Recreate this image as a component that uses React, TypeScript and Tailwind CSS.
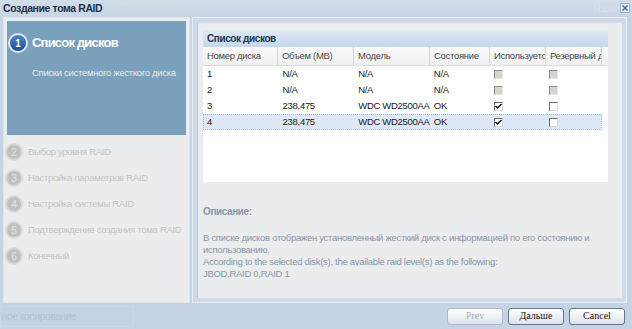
import React from 'react';

type Box = 'off' | 'on' | 'empty';

const rows: { no: string; size: string; model: string; state: string; used: Box; spare: Box; sel?: boolean }[] = [
  { no: '1', size: 'N/A', model: 'N/A', state: 'N/A', used: 'off', spare: 'off' },
  { no: '2', size: 'N/A', model: 'N/A', state: 'N/A', used: 'off', spare: 'off' },
  { no: '3', size: '238,475', model: 'WDC WD2500AAKS', state: 'OK', used: 'on', spare: 'empty' },
  { no: '4', size: '238,475', model: 'WDC WD2500AAKS', state: 'OK', used: 'on', spare: 'empty', sel: true },
];

const cols = ['Номер диска', 'Объем (MB)', 'Модель', 'Состояние', 'Используется', 'Резервный диск'];
const widths = ['w-[75px]', 'w-[76px]', 'w-[76px]', 'w-[60px]', 'w-[56px]', 'w-[56px]'];

const steps = [
  { n: 2, label: 'Выбор уровня RAID' },
  { n: 3, label: 'Настройка параметров RAID' },
  { n: 4, label: 'Настройка системы RAID' },
  { n: 5, label: 'Подтверждение создания тома RAID' },
  { n: 6, label: 'Конечный' },
];

const Check: React.FC<{ kind: Box }> = ({ kind }) => {
  if (kind === 'off') {
    return <span className="block w-[9px] h-[9px] bg-[#d6d3cc] border border-t-[#8f8f8f] border-l-[#8f8f8f] border-r-[#e8e8e8] border-b-[#e8e8e8]" />;
  }
  return (
    <span className="flex items-center justify-center w-[9px] h-[9px] bg-white border border-t-[#6d6d6d] border-l-[#6d6d6d] border-r-[#d8d8d8] border-b-[#d8d8d8]">
      {kind === 'on' && (
        <svg width="7" height="7" viewBox="0 0 7 7">
          <path d="M0.5 3 L2.5 5 L6.5 1" stroke="#111" strokeWidth="1.4" fill="none" />
        </svg>
      )}
    </span>
  );
};

const Btn: React.FC<{ label: string; disabled?: boolean }> = ({ label, disabled }) => (
  <button
    className={`w-[56px] h-[17px] rounded-[3px] border text-[10px] tracking-normal leading-none font-['Liberation_Serif',serif] bg-gradient-to-b from-[#ffffff] to-[#dde3ea] ${
      disabled ? 'border-[#a9bbcf] text-[#a7afb8]' : 'border-[#5f7896] text-[#1a1a1a]'
    }`}
  >
    {label}
  </button>
);

export default function App() {
  return (
    <div className="w-[632px] h-[329px] overflow-hidden bg-[#c5d3e4] font-['Liberation_Sans',sans-serif] text-[9.5px] tracking-[-0.3px] relative">
      {/* title bar */}
      <div className="h-[17px] flex items-center pl-[3px] pr-[2px] bg-gradient-to-b from-[#d3dde9] to-[#c8d5e5]">
        <span className="font-bold text-[10.5px] tracking-[-0.4px] text-[#1f2f45]">Создание тома RAID</span>
        <span className="ml-[10px] -mt-[12px] text-[9px] text-[#d6dee8]">www.thecus.com</span>
        <span className="ml-auto text-[10px] text-[#d7dfe9]">Язык:</span>
        <span className="ml-[2px] -mt-[2px] w-[10px] h-[10px] flex items-center justify-center bg-[#eef3f9] border border-[#9fb4cc]">
          <svg width="6" height="6" viewBox="0 0 6 6">
            <path d="M0.5 0.5 L5.5 5.5 M5.5 0.5 L0.5 5.5" stroke="#3a6ea8" strokeWidth="1.5" />
          </svg>
        </span>
      </div>

      {/* body */}
      <div className="h-[286px] flex gap-[2px] pl-[3px] pr-[5px]">
        {/* left steps */}
        <div className="w-[187px] h-[286px] bg-[#ebeced] border border-[#dde6ef] flex flex-col">
          <div className="m-[3px] h-[114px] bg-[#7aa0bc]">
            <div className="flex items-center pl-[1px] pt-[12px]">
              <span className="shrink-0 w-[20px] h-[20px] rounded-full border-2 border-[#dfe8f2] bg-gradient-to-b from-[#4f83c9] to-[#1c4e98] text-white text-[10px] font-bold flex items-center justify-center">
                1
              </span>
              <span className="ml-[4px] text-[13px] tracking-[-0.8px] font-bold text-white">Список дисков</span>
            </div>
            <div className="pl-[25px] mt-[13px] text-[#e3ebf3] whitespace-nowrap">Списки системного жесткого диска</div>
          </div>
          <div className="flex flex-col mt-[1px] pl-[1px]">
            {steps.map((s) => (
              <div key={s.n} className="h-[26px] flex items-center">
                <span className="shrink-0 w-[18px] h-[18px] rounded-full bg-[#c0c0c0] border-2 border-[#d9d9d9] text-[#e2e2e2] text-[10px] flex items-center justify-center">
                  {s.n}
                </span>
                <span className="ml-[5px] text-[#c4c4c4] whitespace-nowrap">{s.label}</span>
              </div>
            ))}
          </div>
        </div>

        {/* right content */}
        <div className="flex-1 h-[286px] border border-[#e8eef5] bg-[#cfdbe8] p-[4px] pt-[5px]">
          <div className="h-full bg-[#eaecee] border-l border-[#b5c8dc] pl-[5px] pt-[7px] pr-[14px]">
            {/* grid */}
            <div className="h-[152px] bg-white flex flex-col">
              <div className="h-[17px] flex items-center pl-[4px] bg-gradient-to-b from-[#dfe9f5] to-[#c4d7ee] font-bold text-[10px] tracking-[-0.4px] text-[#1e3450]">
                Список дисков
              </div>
              <div className="h-[19px] flex bg-gradient-to-b from-[#fafafa] to-[#f0f0f0] border-b border-[#dcdcdc]">
                {cols.map((c, i) => (
                  <div
                    key={c}
                    className={`${widths[i]} h-full flex items-center pl-[4px] border-r border-[#d6d6d6] text-[#4a4a4a] whitespace-nowrap overflow-hidden`}
                  >
                    {c}
                  </div>
                ))}
              </div>
              {rows.map((r) => (
                <div
                  key={r.no}
                  className={`h-[16px] w-[399px] flex items-center ${
                    r.sel ? 'bg-[#dfe8f6] border border-dotted border-[#a3bae9]' : 'border border-transparent'
                  } text-[#1a1a1a]`}
                >
                  <div className={`${widths[0]} pl-[3px]`}>{r.no}</div>
                  <div className={`${widths[1]} pl-[4px]`}>{r.size}</div>
                  <div className={`${widths[2]} pl-[4px] whitespace-nowrap overflow-hidden`}>{r.model}</div>
                  <div className={`${widths[3]} pl-[4px]`}>{r.state}</div>
                  <div className={`${widths[4]} pl-[4px]`}>
                    <Check kind={r.used} />
                  </div>
                  <div className={`${widths[5]} pl-[4px]`}>
                    <Check kind={r.spare} />
                  </div>
                </div>
              ))}
            </div>

            {/* description */}
            <div className="mt-[22px] font-bold text-[10px] tracking-[-0.4px] text-[#8797aa]">Описание:</div>
            <div className="mt-[13px] leading-[12px] text-[#8898ab] pr-[6px]">
              В списке дисков отображен установленный жесткий диск с информацией по его состоянию и использованию.
              <br />
              According to the selected disk(s), the available raid level(s) as the following:
              <br />
              JBOD,RAID 0,RAID 1
            </div>
          </div>
        </div>
      </div>

      {/* footer */}
      <div className="h-[26px] flex items-center pr-[7px]">
        <div className="w-[134px] h-[21px] overflow-hidden border border-[#cbd7e6] flex items-center">
          <span className="-ml-[30px] whitespace-nowrap text-[10px] text-[#b1c1d6]">Резервное копирование</span>
        </div>
        <div className="ml-auto flex gap-[5px]">
          <Btn label="Prev" disabled />
          <Btn label="Дальше" />
          <Btn label="Cancel" />
        </div>
      </div>
    </div>
  );
}
